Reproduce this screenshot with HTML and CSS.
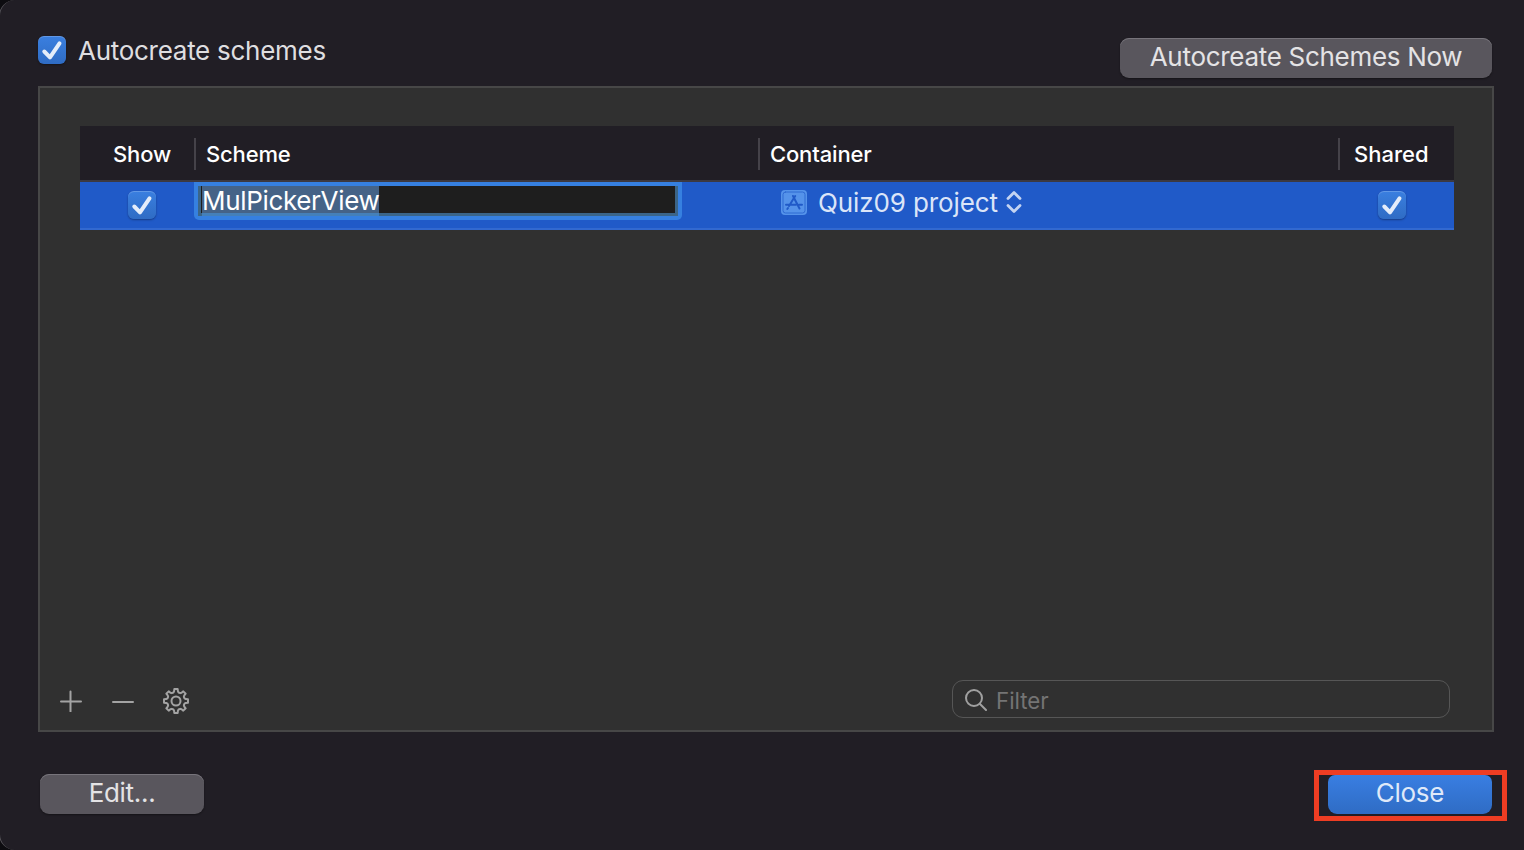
FILE: index.html
```html
<!DOCTYPE html>
<html lang="en">

<head>
    <meta charset="UTF-8">
    <meta name="viewport" content="width=device-width, initial-scale=1.0">
    <title>Manage Schemes</title>
    <link rel="stylesheet" href="styles.css">
</head>

<body>
    <div class="sheet">
        <div class="top-bar">
            <div class="auto">
                <span class="checkbox">
                    <svg viewBox="0 0 28 28"><path d="M6.3 15.5 L12 21.3 L21.5 7.3" /></svg>
                </span>
                <span class="auto-label">Autocreate schemes</span>
            </div>
            <button class="btn btn-auto"><span>Autocreate Schemes Now</span></button>
        </div>

        <div class="panel">
            <div class="table">
                <div class="table-head">
                    <div class="th th-show"><span>Show</span></div>
                    <div class="th"><span>Scheme</span></div>
                    <div class="th"><span>Container</span></div>
                    <div class="th th-shared"><span>Shared</span></div>
                </div>
                <div class="table-row">
                    <div class="td-show">
                        <span class="checkbox">
                            <svg viewBox="0 0 28 28"><path d="M6.3 15.5 L12 21.3 L21.5 7.3" /></svg>
                        </span>
                    </div>
                    <div class="td-scheme">
                        <div class="field">
                            <div class="field-inner"><span class="selected">MulPickerView</span></div>
                        </div>
                    </div>
                    <div class="td-container">
                        <svg class="project-icon" viewBox="0 0 26 25">
                            <rect class="tile" x="0" y="0" width="26" height="25" rx="4" />
                            <rect class="inset" x="2" y="2" width="22" height="21" rx="2.5" />
                            <path class="tools" d="M12 6 L18.5 18.5 M14.2 6 L8 16 M5 14.8 H15 M18 14.8 H21 M7 18 L6.3 19" />
                        </svg>
                        <span class="project-name">Quiz09 project</span>
                        <svg class="chevrons" viewBox="0 0 16 24">
                            <path d="M2 8.5 L8 2.5 L14 8.5 M2 15.5 L8 21.5 L14 15.5" />
                        </svg>
                    </div>
                    <div class="td-shared">
                        <span class="checkbox">
                            <svg viewBox="0 0 28 28"><path d="M6.3 15.5 L12 21.3 L21.5 7.3" /></svg>
                        </span>
                    </div>
                </div>
            </div>

            <div class="panel-footer">
                <div class="tools-row">
                    <svg class="tool" viewBox="0 0 22 22"><path d="M1 11.5 H21 M10.5 1.5 V21.5" /></svg>
                    <svg class="tool" viewBox="0 0 22 22"><path d="M1 12 H21" /></svg>
                    <svg class="tool gear" viewBox="-14 -14 28 28">
                        <path id="gear" d="" />
                        <circle r="4.5" />
                    </svg>
                </div>
                <div class="filter">
                    <svg class="search" viewBox="0 0 22 22">
                        <circle cx="9" cy="9" r="8" />
                        <path d="M15 15 L21 21" />
                    </svg>
                    <span>Filter</span>
                </div>
            </div>
        </div>

        <div class="bottom-bar">
            <button class="btn btn-edit"><span>Edit...</span></button>
            <div class="highlight">
                <button class="btn btn-close"><span>Close</span></button>
            </div>
        </div>
    </div>
    <script>
        // gear outline with eight rounded teeth
        let d = '';
        for (let i = 0; i < 8; i++) {
            const points = [[-17, 8.9], [-11, 10], [-8, 12.1], [8, 12.1], [11, 10], [17, 8.9]];
            points.forEach(([angle, r], j) => {
                const a = (i * 45 - 90 + angle) * Math.PI / 180;
                d += (i || j ? 'L' : 'M') + (r * Math.cos(a)).toFixed(2) + ' ' + (r * Math.sin(a)).toFixed(2);
            });
        }
        document.getElementById('gear').setAttribute('d', d + 'Z');
    </script>
</body>

</html>
```
FILE: styles.css
```css
* {
    box-sizing: border-box;
}

body {
    margin: 0;
    background-color: #0d0c10;
    font-family: Inter, "Liberation Sans", sans-serif;
    color: #dfdee0;
    overflow: hidden;
}

svg {
    display: block;
    flex: none;
    fill: none;
    stroke-linecap: round;
    stroke-linejoin: round;
}

/* the left border runs just off screen, only its corners show */
.sheet {
    width: 1525px;
    height: 850px;
    margin-left: -1px;
    padding: 36px 30px 0 38px;
    background-color: #211e25;
    border-left: 1px solid #5a585d;
    border-radius: 16px 0 0 16px;
    overflow: hidden;
}

.top-bar {
    display: flex;
    justify-content: space-between;
    height: 50px;
}

.auto {
    display: flex;
    gap: 12px;
}

.auto-label {
    font-size: 26px;
    letter-spacing: -0.28px;
    line-height: 30px;
}

.checkbox {
    display: block;
    flex: none;
    width: 28px;
    height: 28px;
    border-radius: 6px;
    background: linear-gradient(#3a7fe0, #2f6cc4);
    box-shadow: inset 0 1px 0 rgba(255, 255, 255, 0.2), 0 1px 2px rgba(0, 0, 0, 0.35);
}

.checkbox path {
    stroke: #e4edfa;
    stroke-width: 4;
}

.btn {
    display: flex;
    justify-content: center;
    height: 40px;
    padding: 0;
    border: none;
    border-radius: 9px;
    background-color: #59565d;
    box-shadow: inset 0 1px 0 #77747b, 0 1px 2px rgba(0, 0, 0, 0.4);
    color: #e4e3e5;
    font-family: inherit;
    font-size: 26px;
    letter-spacing: -0.3px;
    line-height: 38px;
}

.btn-auto {
    width: 372px;
    margin: 2px 2px 0 0;
}

.panel {
    display: flex;
    flex-direction: column;
    justify-content: space-between;
    width: 1456px;
    height: 646px;
    padding: 38px 38px 12px 40px;
    border: 2px solid #474747;
    background-color: #303030;
}

.table-head,
.table-row {
    display: grid;
    grid-template-columns: 114px 564px 580px 116px;
}

.table-head {
    height: 56px;
    padding-top: 12px;
    background-color: #211e25;
    border-bottom: 2px solid #3c3941;
}

.th {
    height: 32px;
    padding-left: 10px;
    border-left: 2px solid #454249;
    color: #fff;
    font-size: 22px;
    font-weight: 500;
    letter-spacing: -0.15px;
    line-height: 32px;
}

.th-show {
    padding-left: 33px;
    border-left: none;
}

.th-shared {
    padding-left: 14px;
    letter-spacing: 0;
}

.table-row {
    height: 48px;
    background-color: #205ac8;
    border-bottom: 2px solid #3269d0;
}

.td-show {
    padding: 9px 0 0 48px;
}

.td-shared {
    padding: 9px 0 0 40px;
}

/* focus ring around the name being edited */
.field {
    width: 488px;
    height: 38px;
    padding: 4px;
    border-radius: 0 0 5px 5px;
    background-color: #3680e0;
}

.field-inner {
    width: 480px;
    height: 30px;
    border: solid #3b6588;
    border-width: 0 3px 3px 3px;
    background-color: #1e1e1e;
}

.selected {
    display: block;
    width: 177px;
    height: 30px;
    margin-left: 1px;
    background: linear-gradient(#456387 27px, #4580b8 27px);
    color: #fff;
    font-size: 26px;
    letter-spacing: -0.33px;
    line-height: 30px;
    white-space: nowrap;
}

.td-container {
    display: flex;
    align-items: flex-start;
    padding: 8px 0 0 23px;
}

.project-icon {
    width: 26px;
    height: 25px;
}

.tile {
    fill: #5593ea;
}

.inset {
    stroke: #2e6ad2;
    stroke-width: 1;
}

.tools {
    stroke: #205ac8;
    stroke-width: 2;
}

.project-name {
    margin-left: 11px;
    color: #dbe5f8;
    font-size: 26px;
    letter-spacing: -0.1px;
    line-height: 26px;
    white-space: nowrap;
}

.chevrons {
    width: 16px;
    height: 24px;
    margin-left: 8px;
    stroke: #c4d4f2;
    stroke-width: 2.8;
}

.panel-footer {
    display: flex;
    align-items: center;
    justify-content: space-between;
    height: 38px;
    margin: 0 4px 0 -20px;
}

.tools-row {
    display: flex;
    align-items: center;
    gap: 30px;
    padding-top: 4px;
}

.tool {
    width: 22px;
    height: 22px;
    stroke: #a3a3a3;
    stroke-width: 2;
}

.gear {
    width: 28px;
    height: 28px;
    margin-left: -2px;
}

.filter {
    display: flex;
    align-items: center;
    width: 498px;
    height: 38px;
    padding: 2px 0 0 12px;
    border: 1px solid #565656;
    border-radius: 11px;
    color: #747474;
    font-size: 22.3px;
}

.search {
    width: 22px;
    height: 22px;
    margin-right: 9px;
    stroke: #a0a0a0;
    stroke-width: 2;
}

.bottom-bar {
    display: flex;
    justify-content: space-between;
    padding: 38px 0 0 2px;
}

.btn-edit {
    width: 164px;
    margin-top: 4px;
}

.highlight {
    width: 193px;
    height: 51px;
    margin-right: -13px;
    padding: 0 9px;
    border: 5px solid #ee3d23;
}

.btn-close {
    width: 164px;
    height: 39px;
    border-radius: 7px 7px 9px 9px;
    background: linear-gradient(#397ee2, #2f6cc4);
    box-shadow: none;
    color: #dfe9f9;
    line-height: 36px;
}
```
